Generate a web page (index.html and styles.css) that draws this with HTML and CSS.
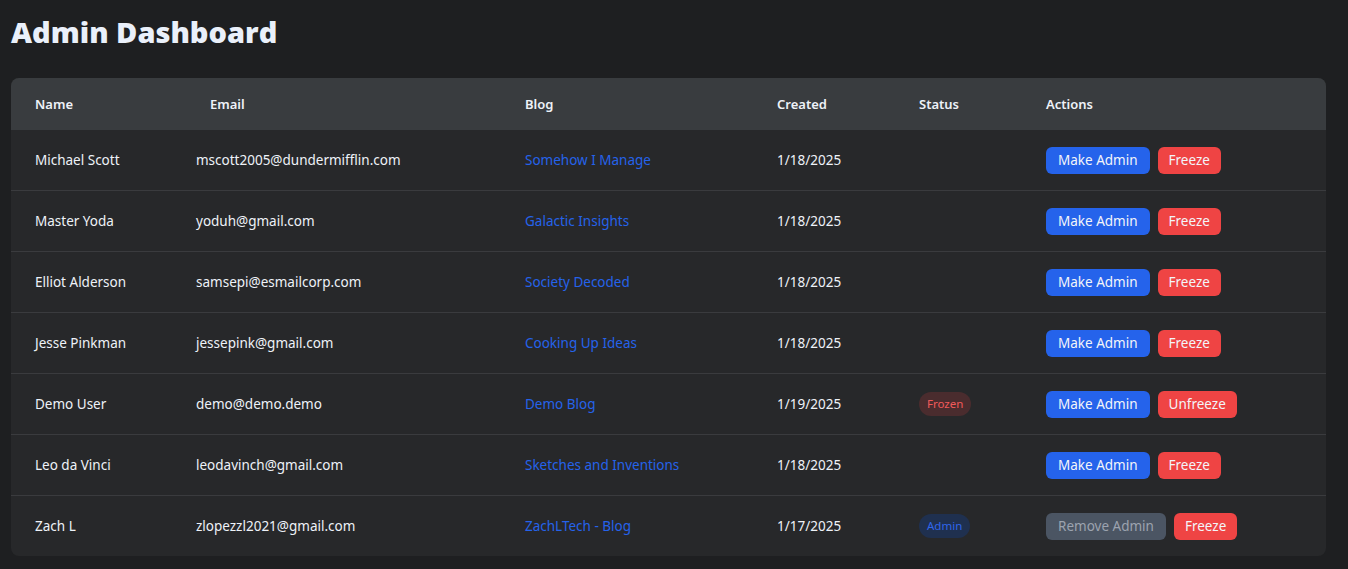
FILE: index.html
```html
<!DOCTYPE html>
<html lang="en">
<head>
<meta charset="utf-8">
<title>Admin Dashboard</title>
<link rel="stylesheet" href="styles.css">
</head>
<body>
<main class="page">
  <h1 class="title">Admin Dashboard</h1>
  <div class="card">
    <table class="users">
      <colgroup>
        <col class="c-name"><col class="c-email"><col class="c-blog"><col class="c-created"><col class="c-status"><col class="c-actions">
      </colgroup>
      <thead>
        <tr>
          <th>Name</th>
          <th class="th-email">Email</th>
          <th>Blog</th>
          <th>Created</th>
          <th>Status</th>
          <th>Actions</th>
        </tr>
      </thead>
      <tbody>
        <tr>
          <td>Michael Scott</td>
          <td>mscott2005@dundermifflin.com</td>
          <td><a class="blog" href="#">Somehow I Manage</a></td>
          <td>1/18/2025</td>
          <td></td>
          <td><div class="actions"><button class="btn btn-blue">Make Admin</button><button class="btn btn-red">Freeze</button></div></td>
        </tr>
        <tr>
          <td>Master Yoda</td>
          <td>yoduh@gmail.com</td>
          <td><a class="blog" href="#">Galactic Insights</a></td>
          <td>1/18/2025</td>
          <td></td>
          <td><div class="actions"><button class="btn btn-blue">Make Admin</button><button class="btn btn-red">Freeze</button></div></td>
        </tr>
        <tr>
          <td>Elliot Alderson</td>
          <td>samsepi@esmailcorp.com</td>
          <td><a class="blog" href="#">Society Decoded</a></td>
          <td>1/18/2025</td>
          <td></td>
          <td><div class="actions"><button class="btn btn-blue">Make Admin</button><button class="btn btn-red">Freeze</button></div></td>
        </tr>
        <tr>
          <td>Jesse Pinkman</td>
          <td>jessepink@gmail.com</td>
          <td><a class="blog" href="#">Cooking Up Ideas</a></td>
          <td>1/18/2025</td>
          <td></td>
          <td><div class="actions"><button class="btn btn-blue">Make Admin</button><button class="btn btn-red">Freeze</button></div></td>
        </tr>
        <tr>
          <td>Demo User</td>
          <td>demo@demo.demo</td>
          <td><a class="blog" href="#">Demo Blog</a></td>
          <td>1/19/2025</td>
          <td><span class="badge badge-frozen">Frozen</span></td>
          <td><div class="actions"><button class="btn btn-blue">Make Admin</button><button class="btn btn-red">Unfreeze</button></div></td>
        </tr>
        <tr>
          <td>Leo da Vinci</td>
          <td>leodavinch@gmail.com</td>
          <td><a class="blog" href="#">Sketches and Inventions</a></td>
          <td>1/18/2025</td>
          <td></td>
          <td><div class="actions"><button class="btn btn-blue">Make Admin</button><button class="btn btn-red">Freeze</button></div></td>
        </tr>
        <tr>
          <td>Zach L</td>
          <td>zlopezzl2021@gmail.com</td>
          <td><a class="blog" href="#">ZachLTech - Blog</a></td>
          <td>1/17/2025</td>
          <td><span class="badge badge-admin">Admin</span></td>
          <td><div class="actions"><button class="btn btn-gray">Remove Admin</button><button class="btn btn-red">Freeze</button></div></td>
        </tr>
      </tbody>
    </table>
  </div>
</main>
</body>
</html>
```

FILE: styles.css
```css
html, body {
  margin: 0;
  padding: 0;
  background: #1e1f21;
}
body {
  font-family: "Noto Sans", "Open Sans", sans-serif;
  color: #e8ecf2;
  font-size: 14px;
}
.page {
  padding: 12px 22px 13px 11px;
}
.title {
  margin: 0 0 26px 0;
  font-family: "Open Sans", "Noto Sans", sans-serif;
  font-weight: 800;
  font-size: 29px;
  line-height: 40px;
  color: #eaf0fa;
}
.card {
  background: #27282a;
  border-radius: 8px;
  overflow: hidden;
}
.users {
  width: 100%;
  border-collapse: collapse;
  table-layout: fixed;
}
.c-name { width: 161px; }
.c-email { width: 329px; }
.c-blog { width: 252px; }
.c-created { width: 142px; }
.c-status { width: 127px; }
.c-actions { width: auto; }
thead tr {
  background: #393c3f;
}
th {
  height: 52px;
  padding: 0 0 0 24px;
  text-align: left;
  font-weight: 600;
  font-size: 13px;
  color: #eef2f8;
}
th.th-email {
  padding-left: 38px;
}
td {
  height: 60px;
  padding: 0 0 0 24px;
  vertical-align: middle;
  font-size: 13.5px;
  color: #eef2f8;
  white-space: nowrap;
}
tbody tr + tr td {
  border-top: 1px solid #3a3b3e;
}
.blog {
  color: #2563eb;
  text-decoration: none;
}
.actions {
  display: flex;
  gap: 8px;
}
.btn {
  font-family: inherit;
  font-size: 13.5px;
  border: 0;
  border-radius: 6px;
  height: 27px;
  padding: 0 12px;
  color: #f3f5f9;
  cursor: pointer;
}
.btn-red { padding: 0 11px; }
.btn-blue { background: #2563eb; }
.btn-red { background: #ef4444; }
.btn-gray { background: #4b5563; color: #9ca3af; }
.badge {
  display: inline-block;
  height: 24px;
  line-height: 24px;
  padding: 0 8px;
  border-radius: 12px;
  font-size: 11.5px;
}
.badge-frozen {
  background: #4a2c2e;
  color: #f05a5a;
}
.badge-admin {
  background: #1f304f;
  color: #2f66ea;
}
```
